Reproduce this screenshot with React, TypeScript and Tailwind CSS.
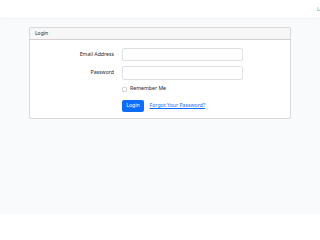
export default function App() {
  const font = { fontFamily: '"Noto Sans", "Liberation Sans", sans-serif' };
  return (
    <div className="w-[320px] h-[214px] overflow-hidden bg-[#f8fafc] text-[#212529]" style={font}>
      <div className="h-[18px] bg-white shadow-[0_0.5px_1.5px_rgba(0,0,0,0.08)] flex items-center overflow-hidden">
        <span className="pl-[317px] whitespace-nowrap text-[5px] text-[rgba(0,0,0,0.55)] leading-none">Login</span>
      </div>
      <div className="mt-[9px] mx-[29px] border-[0.6px] border-[rgba(0,0,0,0.15)] rounded-[2px] bg-white">
        <div className="h-[12px] bg-[#f7f7f7] border-b-[0.6px] border-[rgba(0,0,0,0.15)] flex items-center pl-[5px] text-[5px] leading-none">
          Login
        </div>
        <div className="pt-[7.5px] pb-[5.5px] text-[5.2px] leading-none">
          <div className="flex items-center h-[13.5px]">
            <div className="w-[84px] text-right">Email Address</div>
            <div className="ml-[8px] w-[121px] h-full border-[0.6px] border-[#dee2e6] rounded-[2px] bg-white"></div>
          </div>
          <div className="flex items-center h-[13.5px] mt-[5.3px]">
            <div className="w-[84px] text-right">Password</div>
            <div className="ml-[8px] w-[121px] h-full border-[0.6px] border-[#dee2e6] rounded-[2px] bg-white"></div>
          </div>
          <div className="flex items-center h-[8px] mt-[5.3px] pl-[92px]">
            <div className="w-[5px] h-[5px] border-[0.6px] border-[#ced4da] rounded-[1px] bg-white"></div>
            <span className="ml-[3px]">Remember Me</span>
          </div>
          <div className="flex items-center h-[12.7px] mt-[6.5px] pl-[92px]">
            <div className="w-[22px] h-full bg-[#0d6efd] rounded-[2px] text-white flex items-center justify-center">Login</div>
            <span className="ml-[5.5px] text-[#0d6efd] underline">Forgot Your Password?</span>
          </div>
        </div>
      </div>
    </div>
  );
}
